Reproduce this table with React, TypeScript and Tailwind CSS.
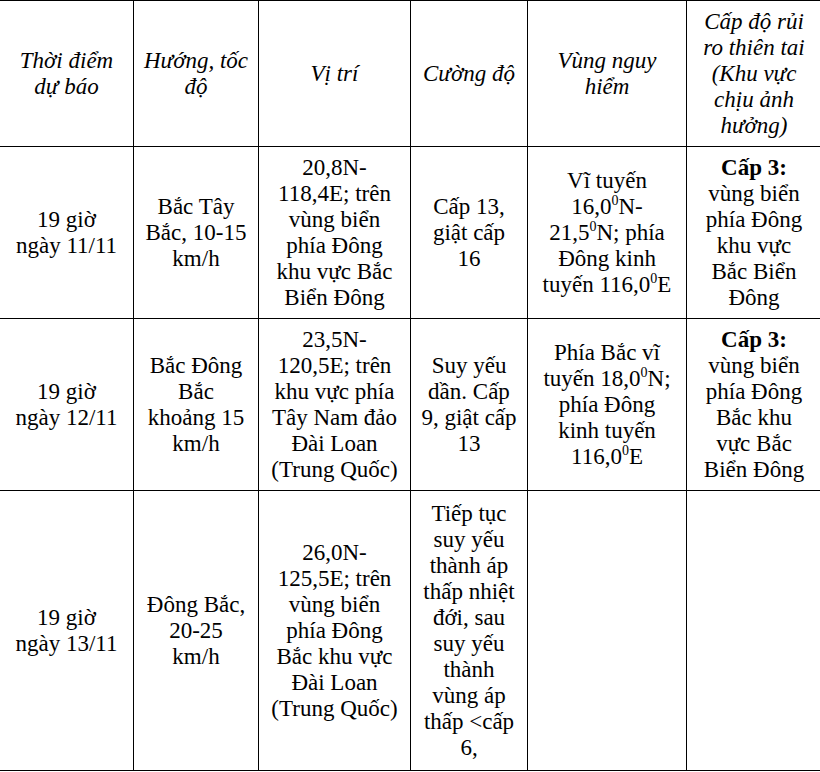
const serif = { fontFamily: '"Liberation Serif", "Times New Roman", serif' };

function Lines({ lines }: { lines: React.ReactNode[] }) {
  return (
    <>
      {lines.map((l, i) => (
        <div key={i} className="whitespace-nowrap">
          {l}
        </div>
      ))}
    </>
  );
}

const deg = <sup className="text-[14px] -top-[9px]">0</sup>;

const header: React.ReactNode[][] = [
  ["Thời điểm", "dự báo"],
  ["Hướng, tốc", "độ"],
  ["Vị trí"],
  ["Cường độ"],
  ["Vùng nguy", "hiểm"],
  ["Cấp độ rủi", "ro thiên tai", "(Khu vực", "chịu ảnh", "hưởng)"],
];

const rows: { h: string; cells: React.ReactNode[][] }[] = [
  {
    h: "h-[172px]",
    cells: [
      ["19 giờ", "ngày 11/11"],
      ["Bắc Tây", "Bắc, 10-15", "km/h"],
      ["20,8N-", "118,4E; trên", "vùng biển", "phía Đông", "khu vực Bắc", "Biển Đông"],
      ["Cấp 13,", "giật cấp", "16"],
      [
        "Vĩ tuyến",
        <>16,0{deg}N-</>,
        <>21,5{deg}N; phía</>,
        "Đông kinh",
        <>tuyến 116,0{deg}E</>,
      ],
      [<b>Cấp 3:</b>, "vùng biển", "phía Đông", "khu vực", "Bắc Biển", "Đông"],
    ],
  },
  {
    h: "h-[172px]",
    cells: [
      ["19 giờ", "ngày 12/11"],
      ["Bắc Đông", "Bắc", "khoảng 15", "km/h"],
      ["23,5N-", "120,5E; trên", "khu vực phía", "Tây Nam đảo", "Đài Loan", "(Trung Quốc)"],
      ["Suy yếu", "dần. Cấp", "9, giật cấp", "13"],
      ["Phía Bắc vĩ", <>tuyến 18,0{deg}N;</>, "phía Đông", "kinh tuyến", <>116,0{deg}E</>],
      [<b>Cấp 3:</b>, "vùng biển", "phía Đông", "Bắc khu", "vực Bắc", "Biển Đông"],
    ],
  },
  {
    h: "h-[280px]",
    cells: [
      ["19 giờ", "ngày 13/11"],
      ["Đông Bắc,", "20-25", "km/h"],
      ["26,0N-", "125,5E; trên", "vùng biển", "phía Đông", "Bắc khu vực", "Đài Loan", "(Trung Quốc)"],
      [
        "Tiếp tục",
        "suy yếu",
        "thành áp",
        "thấp nhiệt",
        "đới, sau",
        "suy yếu",
        "thành",
        "vùng áp",
        "thấp <cấp",
        "6,",
      ],
      [],
      [],
    ],
  },
];

export default function App() {
  return (
    <main className="w-[820px] h-[772px] bg-white overflow-hidden" style={serif}>
      <table className="table-fixed border-collapse text-black text-[23px] leading-[26px] -ml-[1px] w-[822px]">
        <colgroup>
          <col className="w-[134px]" />
          <col className="w-[125px]" />
          <col className="w-[152px]" />
          <col className="w-[117px]" />
          <col className="w-[159px]" />
          <col className="w-[135px]" />
        </colgroup>
        <thead>
          <tr className="h-[146px]">
            {header.map((c, i) => (
              <th key={i} className="border-[1.5px] border-black font-normal italic text-center align-middle p-0">
                <Lines lines={c} />
              </th>
            ))}
          </tr>
        </thead>
        <tbody>
          {rows.map((r, ri) => (
            <tr key={ri} className={r.h}>
              {r.cells.map((c, i) => (
                <td key={i} className="border-[1.5px] border-black text-center align-middle p-0">
                  <Lines lines={c} />
                </td>
              ))}
            </tr>
          ))}
        </tbody>
      </table>
    </main>
  );
}
